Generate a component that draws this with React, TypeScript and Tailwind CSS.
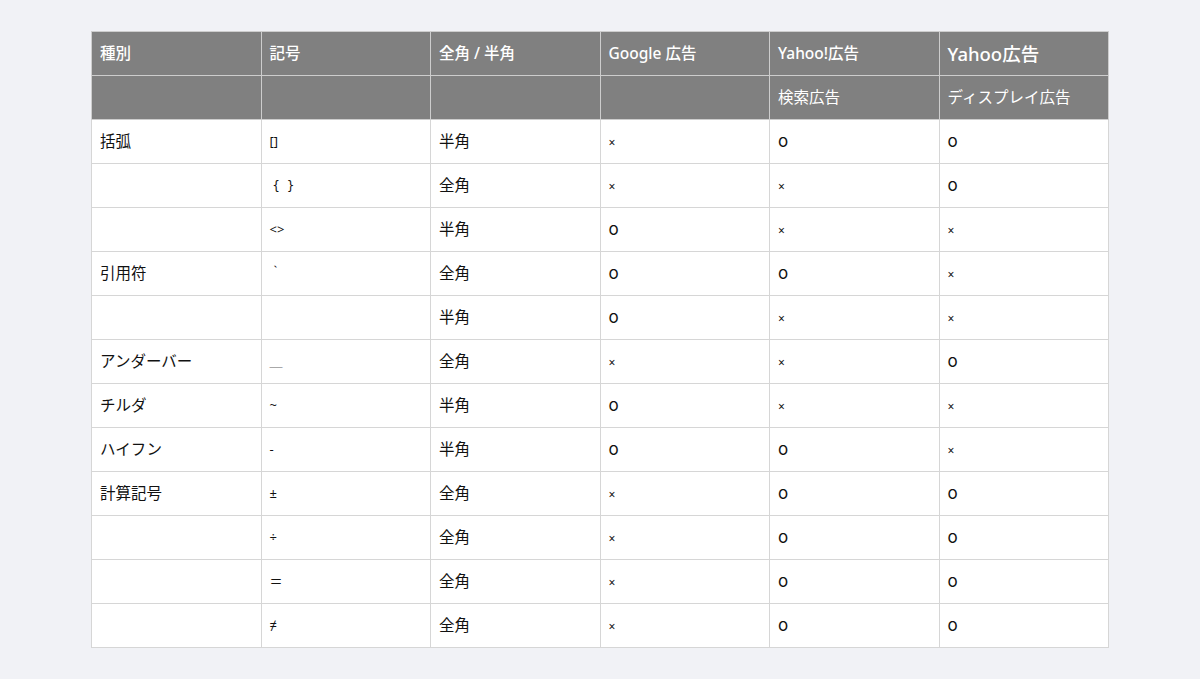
import React from "react";

const rows: [string, string, string, string, string, string][] = [
  ["括弧", "[]", "半角", "×", "○", "○"],
  ["", "{ }", "全角", "×", "×", "○"],
  ["", "<>", "半角", "○", "×", "×"],
  ["引用符", "｀", "全角", "○", "○", "×"],
  ["", "", "半角", "○", "×", "×"],
  ["アンダーバー", "＿", "全角", "×", "×", "○"],
  ["チルダ", "~", "半角", "○", "×", "×"],
  ["ハイフン", "-", "半角", "○", "○", "×"],
  ["計算記号", "±", "全角", "×", "○", "○"],
  ["", "÷", "全角", "×", "○", "○"],
  ["", "＝", "全角", "×", "○", "○"],
  ["", "≠", "全角", "×", "○", "○"],
];

// ○ in the reference reads as a small round o, wider than tall
function Mark({ v }: { v: string }) {
  if (v === "○")
    return <span className="font-['Inter'] text-[17px]">o</span>;
  if (v === "×") return <span className="text-[12px]">×</span>;
  return <span>{v}</span>;
}

function Symbol({ s }: { s: string }) {
  if (s === "{ }")
    return <span className="pl-[3px] font-['DejaVu_Sans_Mono'] text-[12px]">{s}</span>;
  if (s === "＿") return <span className="text-[#666]">{s}</span>;
  return <span>{s}</span>;
}

export default function App() {
  const th = "h-[44px] border border-[#cdcdcd] px-2 text-left align-middle font-medium";
  const td = "h-[44px] border border-[#d6d6d6] px-2 pt-[1px] text-left align-middle";
  return (
    <div
      className="min-h-[679px] w-full bg-[#f1f2f6] pt-[31px]"
      style={{ fontFamily: '"Noto Sans", "Noto Sans CJK JP", sans-serif' }}
    >
      <table className="mx-auto w-[1018px] table-fixed border-collapse text-[15.5px] text-[#111]">
        <thead className="bg-[#808080] text-white">
          <tr>
            <th className={th}>種別</th>
            <th className={th}>記号</th>
            <th className={th}>全角 / 半角</th>
            <th className={th}>Google 広告</th>
            <th className={th}>Yahoo!広告</th>
            <th className={`${th} text-[18.5px]`}>Yahoo広告</th>
          </tr>
          <tr>
            <th className={th}></th>
            <th className={th}></th>
            <th className={th}></th>
            <th className={th}></th>
            <th className={`${th} font-normal`}>検索広告</th>
            <th className={`${th} font-normal`}>ディスプレイ広告</th>
          </tr>
        </thead>
        <tbody className="bg-white">
          {rows.map((r, i) => (
            <tr key={i}>
              <td className={td}>{r[0]}</td>
              <td className={`${td} text-[13px]`}>
                <Symbol s={r[1]} />
              </td>
              <td className={td}>{r[2]}</td>
              <td className={td}><Mark v={r[3]} /></td>
              <td className={td}><Mark v={r[4]} /></td>
              <td className={td}><Mark v={r[5]} /></td>
            </tr>
          ))}
        </tbody>
      </table>
    </div>
  );
}
